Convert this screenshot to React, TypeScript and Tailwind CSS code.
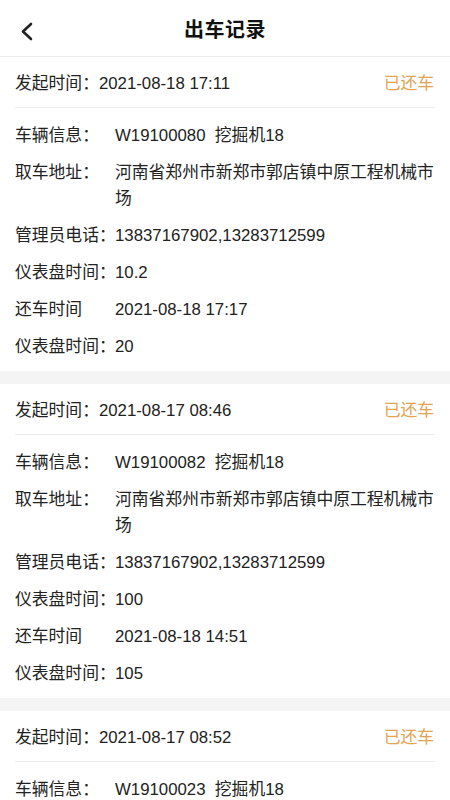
import React from "react";

type Rec = {
  time: string;
  rows: { label: string; value: string }[];
};

const records: Rec[] = [
  {
    time: "2021-08-18 17:11",
    rows: [
      { label: "车辆信息：", value: "W19100080  挖掘机18" },
      { label: "取车地址：", value: "河南省郑州市新郑市郭店镇中原工程机械市场" },
      { label: "管理员电话：", value: "13837167902,13283712599" },
      { label: "仪表盘时间：", value: "10.2" },
      { label: "还车时间", value: "2021-08-18 17:17" },
      { label: "仪表盘时间：", value: "20" },
    ],
  },
  {
    time: "2021-08-17 08:46",
    rows: [
      { label: "车辆信息：", value: "W19100082  挖掘机18" },
      { label: "取车地址：", value: "河南省郑州市新郑市郭店镇中原工程机械市场" },
      { label: "管理员电话：", value: "13837167902,13283712599" },
      { label: "仪表盘时间：", value: "100" },
      { label: "还车时间", value: "2021-08-18 14:51" },
      { label: "仪表盘时间：", value: "105" },
    ],
  },
  {
    time: "2021-08-17 08:52",
    rows: [
      { label: "车辆信息：", value: "W19100023  挖掘机18" },
      { label: "取车地址：", value: "河南省郑州市新郑市郭店镇中原工程机械市场" },
    ],
  },
];

export default function App() {
  return (
    <div
      className="w-[450px] h-[800px] overflow-hidden bg-[#f4f4f4] text-[#222]"
      style={{ fontFamily: '"Liberation Sans", "Noto Sans CJK SC", sans-serif' }}
    >
      <div className="relative h-[57px] bg-white border-b border-[#ececec] flex items-center justify-center">
        <svg
          className="absolute left-[18px] top-[20px]"
          width="18"
          height="22"
          viewBox="0 0 18 22"
          fill="none"
        >
          <path d="M13 4 L5 11.5 L13 19" stroke="#222" strokeWidth="2.6" strokeLinecap="round" strokeLinejoin="round" />
        </svg>
        <div className="text-[20px] font-bold text-[#111] tracking-[0.5px] mt-[3px]">出车记录</div>
      </div>
      <div className="flex flex-col gap-[13px]">
        {records.map((r, i) => (
          <div key={i} className="bg-white px-[15px] pb-[11px]">
            <div className="h-[51px] pt-[4px] flex items-center justify-between border-b border-[#ececec] text-[16.8px]">
              <div className="flex">
                <span>发起时间：</span>
                <span>{r.time}</span>
              </div>
              <span className="text-[#e3a452] pr-[1px]">已还车</span>
            </div>
            <div className="flex flex-col gap-[11px] pt-[15px]">
              {r.rows.map((row, j) => (
                <div key={j} className="flex text-[16.8px] leading-[26px]">
                  <span className="w-[100px] shrink-0 whitespace-nowrap">{row.label}</span>
                  <span className="flex-1 min-w-0 text-[#222] whitespace-pre-wrap">{row.value}</span>
                </div>
              ))}
            </div>
          </div>
        ))}
      </div>
    </div>
  );
}
